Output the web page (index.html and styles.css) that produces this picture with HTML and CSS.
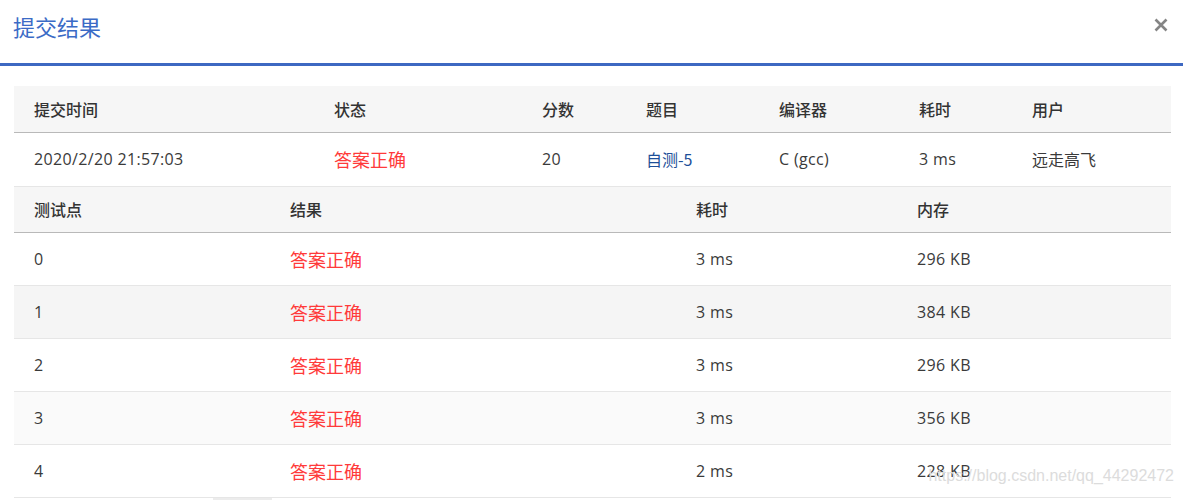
FILE: index.html
```html
<!DOCTYPE html>
<html lang="zh-CN">
<head>
    <meta charset="UTF-8">
    <meta name="viewport" content="width=device-width, initial-scale=1.0">
    <title>提交结果</title>
    <link rel="stylesheet" href="styles.css">
</head>
<body>
    <!-- 弹窗 -->
    <div class="modal">
        <!-- 标题栏 -->
        <div class="modal-head">
            <h3 class="modal-title">提交结果</h3>
            <a href="javascript:;" class="close">
                <svg width="14" height="14" viewBox="0 0 14 14">
                    <path d="M1.5 1.5 L12.5 12.5 M12.5 1.5 L1.5 12.5" stroke="#858585" stroke-width="2.6" fill="none"/>
                </svg>
            </a>
        </div>
        <div class="modal-body">
            <!-- 提交概要 -->
            <table class="grid summary">
                <colgroup>
                    <col style="width:300px"><col style="width:208px"><col style="width:104px"><col style="width:133px"><col style="width:140px"><col style="width:113px"><col>
                </colgroup>
                <thead>
                    <tr><th>提交时间</th><th>状态</th><th>分数</th><th>题目</th><th>编译器</th><th>耗时</th><th>用户</th></tr>
                </thead>
                <tbody>
                    <tr>
                        <td>2020/2/20 21:57:03</td>
                        <td><span class="ok">答案正确</span></td>
                        <td>20</td>
                        <td><a href="javascript:;" class="link">自测-5</a></td>
                        <td>C (gcc)</td>
                        <td>3 ms</td>
                        <td class="cn">远走高飞</td>
                    </tr>
                </tbody>
            </table>
            <!-- 测试点 -->
            <table class="grid cases">
                <colgroup>
                    <col style="width:256px"><col style="width:406px"><col style="width:221px"><col>
                </colgroup>
                <thead>
                    <tr><th>测试点</th><th>结果</th><th>耗时</th><th>内存</th></tr>
                </thead>
                <tbody>
                    <tr><td>0</td><td><span class="ok">答案正确</span></td><td>3 ms</td><td>296 KB</td></tr>
                    <tr class="even"><td>1</td><td><span class="ok">答案正确</span></td><td>3 ms</td><td>384 KB</td></tr>
                    <tr><td>2</td><td><span class="ok">答案正确</span></td><td>3 ms</td><td>296 KB</td></tr>
                    <tr class="even light"><td>3</td><td><span class="ok">答案正确</span></td><td>3 ms</td><td>356 KB</td></tr>
                    <tr><td>4</td><td><span class="ok">答案正确</span></td><td>2 ms</td><td>228 KB</td></tr>
                </tbody>
            </table>
            <div class="scroll"><span class="thumb"></span></div>
        </div>
        <div class="watermark">https://blog.csdn.net/qq_44292472</div>
    </div>
</body>
</html>
```

FILE: styles.css
```css
*{
    margin: 0;
    padding: 0;
    box-sizing: border-box;
}
body{
    background: #fff;
    font-family: "Open Sans", "Noto Sans CJK SC", sans-serif;
    color: #3a3a3a;
}
.modal{
    position: relative;
    width: 1183px;
    height: 500px;
    overflow: hidden;
}
.modal-head{
    height: 66px;
    display: flex;
    align-items: center;
    justify-content: space-between;
    padding: 0 15px 12px 13px;
    border-bottom: 3px solid #3d68c2;
}
.modal-title{
    font-family: "Noto Sans CJK SC", sans-serif;
    font-size: 22px;
    font-weight: normal;
    color: #3b6bc6;
}
.close{
    display: flex;
    margin-top: -2px;
}
.modal-body{
    padding: 20px 12px 0 14px;
}
.grid{
    width: 1157px;
    border-collapse: collapse;
    table-layout: fixed;
    font-size: 16px;
    letter-spacing: 0.35px;
}
.grid th{
    height: 46px;
    background: #f6f6f6;
    text-align: left;
    padding: 0 0 0 20px;
    font-family: "Noto Sans CJK SC", sans-serif;
    font-weight: 500;
    font-size: 16px;
    letter-spacing: 0;
    color: #333;
    border-bottom: 1px solid #b9b9b9;
}
.grid td{
    height: 53px;
    padding: 0 0 0 20px;
    border-bottom: 1px solid #e6e6e6;
    white-space: nowrap;
}
.summary td{
    height: 54px;
}
.grid td.cn{
    font-family: "Noto Sans CJK SC", sans-serif;
    letter-spacing: 0;
}
.grid tr.even td{
    background: #f5f5f5;
}
.grid tr.light td{
    background: #fafafa;
}
.ok{
    font-family: "Noto Sans CJK SC", sans-serif;
    font-size: 18px;
    letter-spacing: 0;
    color: #ff3a3a;
}
.link{
    font-family: "Noto Sans CJK SC", sans-serif;
    letter-spacing: 0;
    color: #1d4f99;
    text-decoration: none;
}
.scroll{
    height: 3px;
    display: flex;
    padding-left: 199px;
}
.thumb{
    width: 59px;
    background: #ececec;
}
.watermark{
    position: absolute;
    right: 9px;
    top: 467px;
    font-family: "Liberation Sans", Arial, sans-serif;
    font-size: 16px;
    color: #dcdcdc;
}
```
